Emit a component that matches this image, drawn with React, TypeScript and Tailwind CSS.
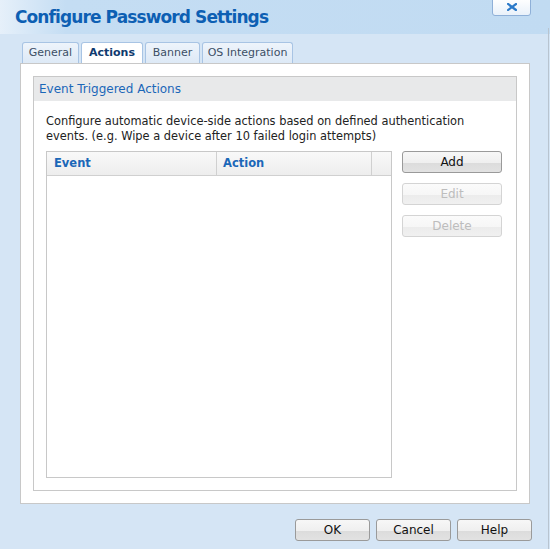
import React from "react";

// ── Buttons ─────────────────────────────────────
function Btn({ label, disabled, className = "" }: { label: string; disabled?: boolean; className?: string }) {
  return (
    <div
      className={`flex items-center justify-center rounded-[3px] border text-[12px] ${
        disabled
          ? "border-[#d4d4d4] text-[#bdbdbd] bg-[linear-gradient(#fbfbfb_0%,#f6f6f6_55%,#ececec_56%,#f0f0f0_100%)]"
          : "border-[#9a9a9a] text-[#111] bg-[linear-gradient(#f7f7f7_0%,#efefef_55%,#dcdcdc_56%,#e2e2e2_100%)]"
      } ${className}`}
    >
      {label}
    </div>
  );
}

const tabs = [
  { label: "General", w: "w-[57px]" },
  { label: "Actions", w: "w-[62px]", active: true },
  { label: "Banner", w: "w-[55px]" },
  { label: "OS Integration", w: "w-[91px]" },
];

export default function App() {
  return (
    <div
      className="relative w-[550px] h-[549px] overflow-hidden bg-[#d5e5f5] font-['DejaVu_Sans',Verdana,sans-serif]"
    >
      {/* title band */}
      <div className="h-[34px] bg-[linear-gradient(90deg,#e6f0fa_0%,#c4ddf3_12%,#c1dbf2_100%)] pl-[15px] pt-[5px]">
        <h1 className="text-[17px] font-bold text-[#0d5fb3] tracking-[-0.9px]">Configure Password Settings</h1>
      </div>

      {/* close button */}
      <div className="absolute left-[492px] top-[-2px] w-[39px] h-[18px] rounded-b-[3px] border border-[#8fb0d8] bg-[linear-gradient(#ffffff,#e9f1fa)] flex items-center justify-center">
        <svg width="10" height="8" viewBox="0 0 10 8">
          <path d="M1 1 L9 7 M9 1 L1 7" stroke="#2c7ac9" strokeWidth="2.2" strokeLinecap="square" />
        </svg>
      </div>

      {/* right edge line */}
      <div className="absolute right-[1px] top-[28px] bottom-0 w-px bg-[#b8c4d0]" />

      <div className="px-[20px] pt-[8px]">
        {/* tabs */}
        <div className="flex gap-[2px] pl-[2px] h-[21px] items-end">
          {tabs.map((t) => (
            <div
              key={t.label}
              className={`${t.w} flex items-center justify-center rounded-t-[3px] border border-b-0 text-[11px] ${
                t.active
                  ? "h-[21px] bg-white border-[#a8c4e4] font-bold text-[#0f3a6e]"
                  : "h-[21px] bg-[linear-gradient(#eef4fb,#dde9f6)] border-[#a8c4e4] text-[#3c4f66]"
              }`}
            >
              {t.label}
            </div>
          ))}
        </div>

        {/* tab panel */}
        <div className="w-[510px] h-[441px] bg-white border border-[#c8c8c8] p-[12px]">
          <div className="h-full border border-[#c8c8c8] flex flex-col">
            <div className="h-[24px] bg-[#e8e9ea] pl-[5px] flex items-center text-[12px] text-[#1b67b8]">
              Event Triggered Actions
            </div>
            <div className="flex-1 px-[12px] pt-[13px] pb-[12px] flex flex-col">
              <p className="text-[11.4px] leading-[15px] text-[#222]">
                Configure automatic device-side actions based on defined authentication
                <br />
                events. (e.g. Wipe a device after 10 failed login attempts)
              </p>
              <div className="flex-1 flex gap-[10px] mt-[7px]">
                {/* table */}
                <div className="w-[346px] h-full border border-[#c8c8c8] flex flex-col">
                  <div className="h-[24px] flex border-b border-[#d0d0d0] bg-[linear-gradient(#f9f9f9,#ededed)] text-[11.5px] font-bold text-[#1b67b8]">
                    <div className="w-[170px] border-r border-[#d0d0d0] pl-[7px] flex items-center">Event</div>
                    <div className="w-[155px] border-r border-[#d0d0d0] pl-[6px] flex items-center">Action</div>
                    <div className="flex-1" />
                  </div>
                  <div className="flex-1 bg-white" />
                </div>
                {/* side buttons */}
                <div className="flex flex-col gap-[10px]">
                  <Btn label="Add" className="w-[100px] h-[22px]" />
                  <Btn label="Edit" disabled className="w-[100px] h-[22px]" />
                  <Btn label="Delete" disabled className="w-[100px] h-[22px]" />
                </div>
              </div>
            </div>
          </div>
        </div>

        {/* footer */}
        <div className="flex justify-end gap-[6px] pt-[15px] mr-[-2px]">
          <Btn label="OK" className="w-[75px] h-[22px]" />
          <Btn label="Cancel" className="w-[75px] h-[22px]" />
          <Btn label="Help" className="w-[75px] h-[22px]" />
        </div>
      </div>
    </div>
  );
}
